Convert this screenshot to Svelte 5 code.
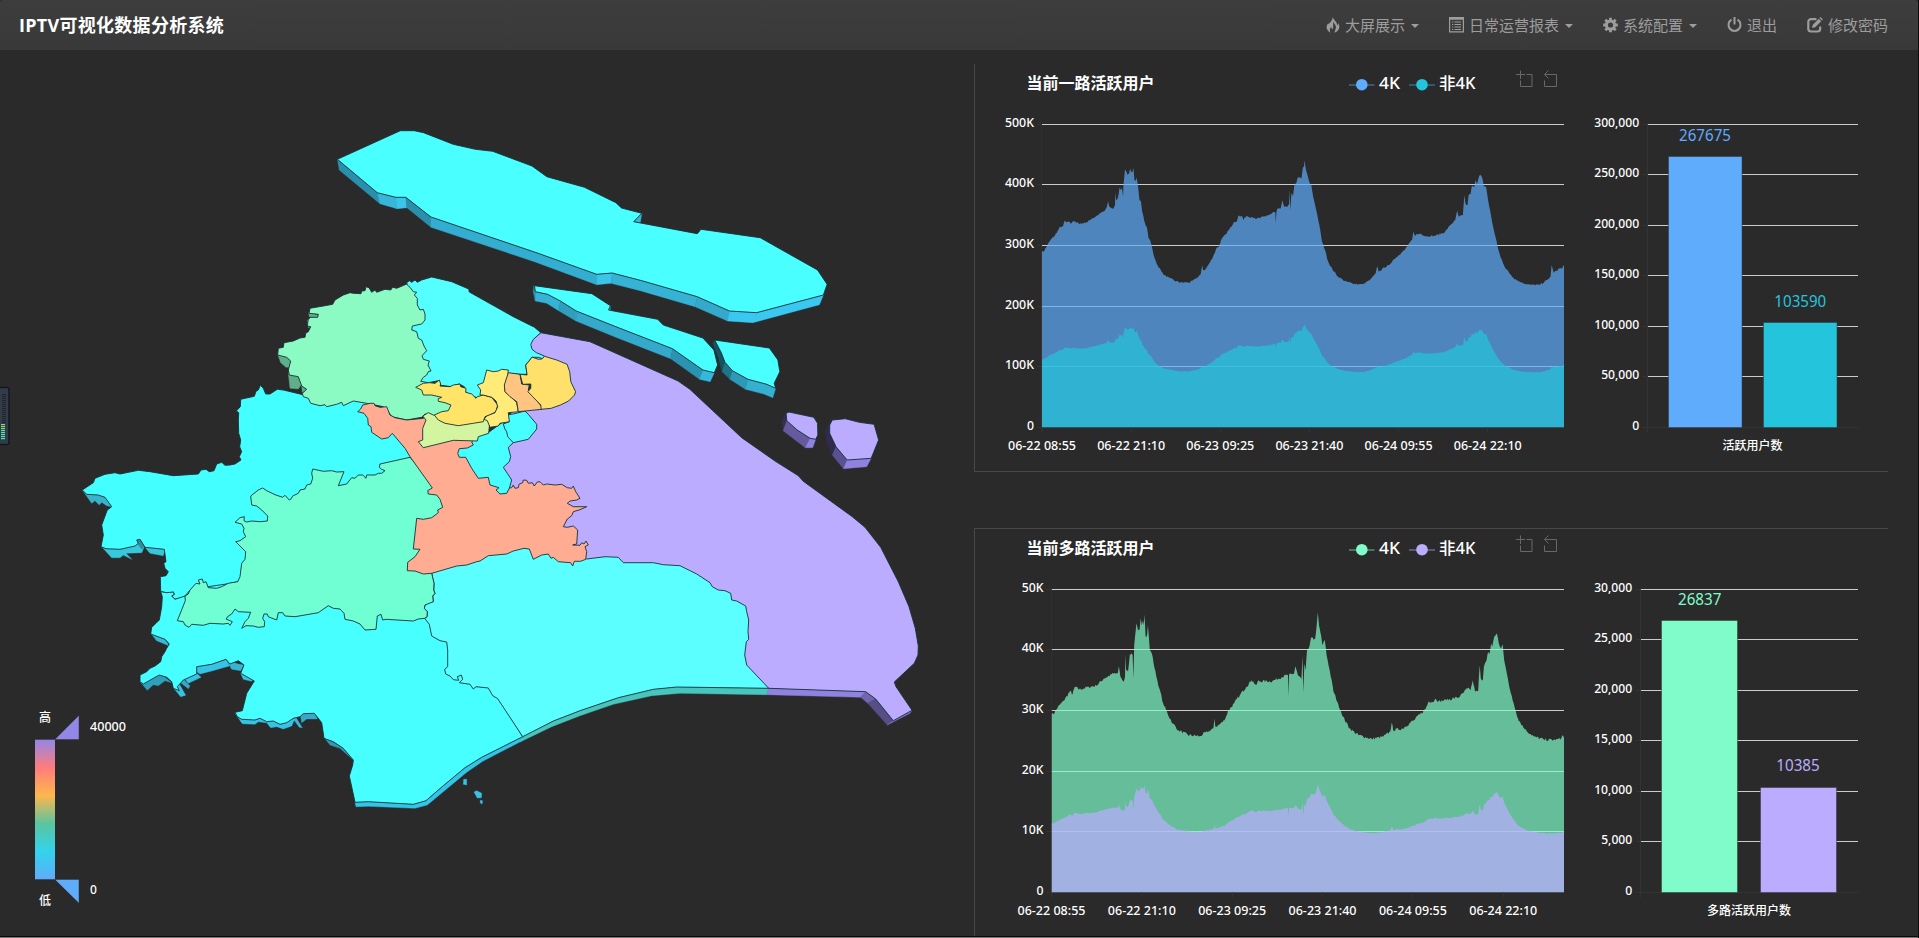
<script>
  const tiles = {
    N: [320, 110, 2.7034, 3],
    W: [70, 260, 3, 3],
    S: [120, 540, 3, 3],
    E: [480, 420, 3, 3]
  };
  function outline(src) {
    let t = tiles.N;
    const out = [];
    for (const tok of src.trim().split(/\s+/)) {
      if (tiles[tok]) { t = tiles[tok]; continue; }
      const [x, y] = tok.split(',').map(Number);
      out.push((t[0] + x / t[2]).toFixed(1) + ',' + (t[1] + y / t[3]).toFixed(1));
    }
    return out.join(' ');
  }

  const walls = [
    ['#2a8fac', 'N 47,148 155,248 162,281 52,180'],
    ['#38b6d8', 'N 155,248 205,262 208,296 162,281'],
    ['#3bc5e8', 'N 205,262 232,262 235,293 208,296'],
    ['#2a8fac', 'N 232,262 300,321 300,352 235,293'],
    ['#34aed0', 'N 300,321 590,430 748,493 748,524 580,455 300,352'],
    ['#3bc5e8', 'N 748,493 790,489 787,520 748,524'],
    ['#35b2d4', 'N 790,489 870,512 1020,560 1014,590 866,542 787,520'],
    ['#34a9cb', 'N 1020,560 1107,603 1102,633 1014,590'],
    ['#3bc8f0', 'N 1107,603 1180,608 1361,555 1350,584 1170,638 1102,633'],
    ['#38b6d8', 'N 848,335 870,310 866,338'],
    ['#2a8fac', 'N 578,527 582,545 582,573 576,545'],
    ['#36b2d4', 'N 582,545 615,553 650,573 645,602 613,580 582,573'],
    ['#2f9fbe', 'N 650,573 693,603 692,633 645,602'],
    ['#34a9cb', 'N 693,603 800,650 953,716 948,746 800,682 692,633'],
    ['#2a93b2', 'N 953,716 1035,780 1026,808 948,746'],
    ['#36b8dc', 'N 1035,780 1066,788 1055,815 1026,808'],
    ['#38b6d8', 'N 780,600 785,587 784,604'],
    ['#14525f', 'N 1067,690 1085,728 1095,757 1087,785 1076,740 1062,700'],
    ['#1f7488', 'N 1095,757 1115,782 1108,808 1087,785'],
    ['#2d99b6', 'N 1115,782 1157,808 1150,838 1108,808'],
    ['#35b0d0', 'N 1157,808 1208,823 1232,835 1224,863 1200,852 1150,838'],
    ['#332e52', 'N 1260,910 1262,932 1252,960 1248,935'],
    ['#655a9e', 'N 1262,932 1290,960 1325,985 1312,1013 1252,962'],
    ['#9082e0', 'N 1325,985 1340,988 1332,1013 1312,1013'],
    ['#302b4e', 'N 1380,932 1378,970 1395,1010 1385,1035 1370,1000 1366,965'],
    ['#5a5190', 'N 1395,1010 1425,1050 1415,1076 1385,1035'],
    ['#9082e0', 'N 1425,1050 1490,1045 1478,1070 1415,1076'],
    ['#9082e0', 'E 866,805 1157,815 1142,832 858,824'],
    ['#7066ae', 'E 1157,815 1187,837 1163,850 1142,832'],
    ['#574e87', 'E 1187,837 1240,902 1222,915 1163,850'],
    ['#8277cc', 'E 1240,902 1296,871 1290,880 1222,915'],
    ['#48c5bd', 'E 129,948 220,903 300,872 415,833 520,808 590,801 866,805 858,824 600,820 515,827 400,853 300,887 215,920 120,966'],
    ['#36c4e6', 'S 1208,590 1085,652 1035,683 970,737 918,782 880,793 745,785 705,787 708,800 745,799 885,805 922,795 1040,697 1088,664 1205,603'],
    ['#38b9da', 'S 94,282 135,298 148,318 110,302'],
    ['#319fbb', 'S 60,425 82,451 100,434 115,437 135,422 155,428 120,400'],
    ['#38c2e4', 'S 160,443 182,470 197,466 178,432'],
    ['#38a8c6', 'S 178,425 205,446 210,438 190,418'],
    ['#38c2e4', 'S 190,412 230,400 243,412 205,430'],
    ['#38c2e4', 'S 230,380 275,373 318,358 328,378 275,393 240,402 228,394'],
    ['#36b4d4', 'S 320,362 355,372 372,375 362,392 335,388'],
    ['#38c2e4', 'S 362,400 403,412 395,424 370,418'],
    ['#38c2e4', 'S 345,520 367,551 405,553 415,545 440,548 452,563 470,560 490,567 515,558 525,535 480,545 440,540 405,530'],
    ['#38b9da', 'S 525,528 547,563 538,562 522,540'],
    ['#38a8c6', 'S 540,520 583,515 592,537 560,537 545,548'],
    ['#3697b3', 'S 612,592 630,615 660,625 700,660 698,640'],
    ['#38c2e4', 'S 1031,718 1040,718 1040,735 1030,733'],
    ['#38c2e4', 'S 1062,756 1070,752 1085,760 1084,773 1072,774'],
    ['#38c2e4', 'S 1081,780 1088,783 1086,792 1081,789'],
    ['#37b3cc', 'W 37,690 65,730 75,722 88,735 95,727 110,737 125,740 105,708'],
    ['#38c8dc', 'W 93,858 125,893 150,893 160,885 185,898 168,880 215,878 222,862 200,840'],
    ['#2f8d9c', 'W 205,835 225,858 215,868 198,845'],
    ['#37c6dc', 'W 222,858 240,880 280,887 285,865'],
    ['#5faf8a', 'W 716,158 745,165 742,172 718,170'],
    ['#5faf8a', 'W 712,180 732,195 715,203'],
    ['#5faf8a', 'W 623,283 632,308 648,322 662,322 662,303 650,290'],
    ['#5faf8a', 'W 655,340 660,385 685,387 695,372 688,348'],
    ['#5faf8a', 'W 695,378 713,390 697,397']
  ];

  const fengxianWest = 'S 935,100 938,115 942,130 941,150 945,160 938,168 940,185 927,187 915,195 913,205 922,215 921,230 914,235';

  const regions = [
    ['#4affff', 'N 47,148 217,62 255,62 280,68 360,103 420,118 467,124 573,168 613,200 715,232 800,278 815,294 870,310 848,335 1020,371 1030,358 1190,383 1345,480 1371,523 1361,555 1180,608 1107,603 1020,560 870,512 790,489 748,493 590,430 300,321 232,262 205,262 155,248'],
    ['#4affff', 'N 580,527 735,551 785,587 780,600 913,628 928,645 1035,684 1065,720 1075,765 1066,788 1035,780 953,716 800,650 693,603 650,573 615,553 582,545'],
    ['#4affff', 'N 1067,690 1215,714 1238,750 1243,785 1228,820 1232,835 1208,823 1157,808 1115,782 1095,757 1085,728'],
    ['#bbacff', 'N 1268,906 1335,922 1345,940 1346,975 1340,988 1325,985 1290,960 1262,932 1260,910'],
    ['#bbacff', 'N 1385,930 1420,926 1458,937 1498,943 1510,990 1490,1045 1425,1050 1395,1010 1378,970 1378,945'],
    ['#bbacff', 'N 597,668 650,679 730,695 968,813 1000,838 1140,983 E 885,123 955,167 970,184 1117,290 1155,322 1202,382 1255,485 1287,560 1306,625 1315,678 1314,705 1303,730 1243,786 1248,800 1296,871 1240,902 1187,837 1157,815 866,805 700,700 300,450 200,300 90,260 40,190 40,40 N 540,880 590,800 540,750 560,702'],
    ['#44ffff', 'W 37,690 70,668 75,655 105,643 135,638 150,642 205,631 240,635 310,647 385,642 393,630 408,628 418,635 432,632 440,612 455,607 465,616 480,615 495,612 513,600 508,590 515,575 509,560 512,540 506,520 505,480 506,458 499,453 511,440 512,418 553,409 558,394 565,390 571,376 580,385 587,402 600,402 622,388 640,390 690,402 720,410 880,420 960,480 1040,600 900,700 700,760 560,800 560,900 503,965 440,985 S 212,148 205,170 195,168 190,172 165,178 155,168 163,163 160,156 150,160 140,158 122,155 121,110 138,107 145,95 135,85 131,70 138,65 133,28 W 283,868 225,862 210,838 200,840 205,850 195,858 150,868 108,866 93,860 100,825 95,795 112,750 125,740 105,712 85,705 50,703'],
    ['#48ffff', 'S 122,155 127,170 125,200 118,240 108,250 95,262 92,282 135,298 148,312 140,325 135,335 125,350 122,365 105,378 90,385 80,395 60,405 60,425 70,432 100,415 118,405 140,412 155,425 160,445 178,452 172,440 190,420 230,402 230,380 275,373 318,358 330,372 355,362 372,375 362,400 403,423 380,460 367,512 345,517 352,530 365,538 405,540 420,535 440,545 460,543 480,553 500,548 520,535 540,530 550,521 583,520 605,548 612,595 640,605 670,625 700,660 698,675 688,708 694,735 705,787 745,785 880,793 918,782 970,737 1035,683 1085,652 1208,590 1060,350 960,180 400,120 212,148 195,168 165,178 155,168 163,163 160,156 140,158'],
    ['#5cffff', fengxianWest + ' 928,253 935,288 960,302 980,306 983,330 983,380 974,388 977,402 990,408 1000,419 1016,421 1012,410 1024,405 1028,418 1018,428 1050,433 1060,447 1068,440 1105,444 1118,467 1133,476 1208,590 E 220,903 300,872 415,833 520,808 590,801 866,805 800,735 794,705 799,665 806,658 804,635 806,600 800,575 797,558 770,543 755,540 752,520 735,512 715,510 697,500 690,488 650,462 600,437 550,434 520,428 430,428 415,412 375,410 320,417 150,300 0,300'],
    ['#70fed3', 'W 1020,592 930,612 928,622 935,628 945,632 935,640 925,640 915,645 890,645 888,655 878,645 865,645 855,655 845,653 830,672 805,677 822,635 800,636 785,632 760,634 728,627 725,640 728,655 722,672 710,675 705,687 690,690 685,700 668,708 662,718 658,720 645,706 638,712 615,704 590,692 578,684 565,690 542,708 545,735 560,738 575,750 593,768 592,783 570,785 545,783 530,786 522,782 523,770 510,773 495,787 515,792 522,805 520,815 527,830 510,842 497,845 527,875 525,898 515,910 510,950 503,965 475,970 455,980 440,985 415,983 408,965 400,968 397,957 385,960 390,972 378,970 362,988 S 210,150 205,162 195,168 196,182 187,205 172,242 190,245 195,255 207,262 215,253 250,256 270,250 310,252 325,250 330,256 337,245 318,237 325,228 335,222 345,207 355,215 392,217 385,235 375,245 365,265 378,257 400,258 415,262 433,260 434,245 428,235 432,222 442,222 445,230 470,240 475,218 488,218 495,228 525,230 595,218 625,197 640,205 660,207 672,220 675,238 700,243 720,252 735,270 768,268 772,228 783,223 788,240 798,238 880,243 895,237 914,235 921,230 922,215 913,205 915,195 940,185 938,168 945,160 941,150 942,130 935,100 W 1200,850 1110,690'],
    ['#8bfbc3', 'W 1010,72 980,85 968,82 962,90 945,88 920,97 915,90 905,97 897,83 888,80 885,92 875,93 873,101 850,100 840,98 820,105 795,120 788,133 760,138 720,145 717,160 745,163 743,172 722,172 715,178 712,198 722,200 715,215 707,220 705,232 690,234 670,243 642,248 640,262 625,265 623,285 650,292 662,303 655,330 658,345 685,350 695,378 710,388 697,400 700,410 715,415 722,430 750,437 765,434 770,440 800,433 815,427 820,437 850,423 890,430 940,440 955,455 965,470 1010,480 1055,472 1065,462 1100,470 1170,440 1120,390 1075,360 1095,330 1075,205 1085,150 1065,95 1035,78'],
    ['#55ffff', 'W 1020,82 1012,75 1010,68 1018,62 1025,67 1035,60 1042,67 1055,60 1085,51 1145,65 1196,87 1198,96 1330,170 1390,200 N 578,650 597,668 577,688 570,703 573,718 585,728 607,738 602,746 590,742 573,742 556,765 560,793 541,793 510,790 490,835 440,870 428,865 412,858 W 1200,402 1188,398 1183,380 1168,372 1145,380 1112,376 1105,362 1075,368 1052,364 1060,352 1070,345 1075,335 1083,333 1074,315 1078,303 1060,298 1056,287 1070,272 1062,258 1055,240 1045,235 1040,215 1025,210 1027,198 1055,192 1065,180 1065,162 1060,148 1050,150 1042,135 1042,115 1033,105 1040,97 1030,95'],
    ['#ffac92', 'W 863,455 872,447 878,435 900,430 912,430 915,437 930,442 950,440 960,465 975,473 1010,480 1060,475 1070,465 1120,480 1212,530 1240,560 1215,575 1205,590 1220,630 1250,640 1275,660 1300,680 1310,698 E 82,205 95,203 100,195 105,205 115,203 117,193 128,188 130,180 140,181 145,190 157,188 163,198 172,186 180,185 190,195 200,192 225,195 245,193 262,203 275,205 280,198 287,215 300,235 290,240 270,243 262,250 280,260 320,260 300,269 280,275 275,287 262,297 250,320 262,322 280,318 293,330 290,372 278,375 300,376 305,368 312,372 318,363 325,375 315,380 320,395 317,418 302,424 283,424 278,438 272,428 235,425 220,412 213,415 205,402 185,405 160,418 148,387 132,385 100,393 80,402 25,407 0,423 W 1220,905 1190,915 1160,918 1085,940 1060,942 1035,933 1012,932 1013,907 1035,890 1050,868 1030,867 1040,775 1060,778 1085,773 1105,758 1103,750 1118,742 1110,718 1100,705 1075,702 1073,692 1087,684 1070,660 1020,590 1005,565 967,520 955,533 935,537 905,517 903,500 895,495 893,475 882,460'],
    ['#48ffff', 'W 1252,520 1300,485 1310,515 1325,530 1330,548 1315,562 1322,590 1318,605 1300,622 1312,640 1325,660 1318,685 1310,700 1290,702 1278,690 1287,683 1260,675 1255,652 1225,655 1205,625 1187,592 1168,592 1163,580 1168,566 1192,564 1210,555 1205,546 1225,525'],
    ['#48ffff', 'W 1310,465 1330,462 1365,453 1375,463 1400,493 1400,507 1375,538 1330,548 1313,530 1310,515 1305,508 1300,492 1318,485'],
    ['#d3f59f', 'W 1058,468 1075,458 1090,465 1120,475 1165,480 1235,465 1262,470 1258,500 1256,520 1225,530 1222,543 1150,541 1060,563 1045,545 1058,540 1058,505 1068,480'],
    ['#ffe468', 'W 1037,382 1060,370 1078,368 1095,370 1108,360 1112,372 1110,378 1140,380 1150,375 1170,372 1172,380 1188,385 1187,397 1205,402 1218,415 1222,410 1240,405 1265,412 1283,435 1278,455 1260,465 1245,470 1240,485 1210,490 1165,497 1125,490 1105,480 1093,465 1115,455 1135,452 1143,435 1125,428 1105,424 1105,416 1115,412 1085,405 1060,405 1055,390'],
    ['#ffeb77', 'W 1250,330 1270,335 1285,333 1295,328 1315,330 1313,350 1305,375 1305,395 1328,415 1340,428 1345,455 1315,458 1318,485 1290,490 1285,498 1260,502 1252,482 1242,478 1250,468 1275,458 1283,440 1278,423 1265,412 1240,405 1230,405 1232,390 1222,375 1240,368'],
    ['#ffc47f', 'W 1315,338 1350,343 1355,372 1378,375 1375,390 1395,415 1415,440 1415,448 1345,455 1340,425 1320,410 1305,395 1303,375'],
    ['#ffe06a', 'N 541,793 560,795 556,765 566,752 573,741 590,748 600,747 607,739 640,750 668,763 675,785 678,815 691,845 688,855 672,873 650,885 625,895 598,898 597,885 575,860 562,845 570,835 570,822 548,823']
  ];

  // Concurrent users through time: plot-space samples, x then height line.
  const seriesSingle = '188,605 192,605 210,570 222,555 236,530 243,528 247,512 252,517 258,514 263,520 270,512 278,518 292,520 308,515 318,505 328,500 340,490 352,482 357,472 361,453 364,470 375,476 379,465 380,428 382,450 386,445 391,412 395,420 397,412 400,440 401,405 405,358 412,375 416,370 418,355 424,368 427,353 430,390 433,392 435,382 438,400 443,450 447,455 450,485 458,522 462,530 466,560 472,575 480,615 490,645 500,663 508,675 520,683 533,691 550,697 575,697 590,686 603,672 607,645 609,660 615,658 625,640 635,620 645,592 650,590 656,570 668,552 678,537 690,515 698,512 702,495 712,500 714,510 722,498 745,505 770,498 790,488 798,487 799,520 801,483 805,475 812,475 816,450 821,470 830,470 834,462 835,418 837,480 840,430 844,438 848,402 853,398 856,382 866,385 870,352 873,348 874,330 878,360 883,380 888,400 892,405 897,440 905,480 913,525 920,575 928,600 936,635 948,660 963,680 980,693 1000,700 1025,703 1045,690 1060,670 1064,648 1068,665 1083,652 1095,645 1105,630 1120,615 1135,600 1155,570 1159,545 1162,555 1178,550 1190,558 1215,557 1240,547 1255,525 1268,510 1273,482 1277,500 1288,495 1292,435 1295,460 1300,465 1303,435 1308,432 1312,405 1318,410 1321,390 1325,402 1330,380 1334,374 1338,380 1343,408 1349,412 1354,450 1362,500 1370,545 1378,585 1386,620 1400,655 1420,683 1440,697 1465,704 1488,704 1508,690 1517,680 1520,645 1525,668 1540,655 1546,655 1552,645';
  const seriesMulti = '213,612 218,612 230,590 245,572 262,542 268,552 274,530 285,538 310,530 330,527 350,505 375,490 386,490 389,468 393,500 402,515 405,500 406,433 408,480 413,485 418,430 425,435 427,505 429,405 435,340 439,362 443,360 446,325 449,345 452,330 454,345 456,313 459,380 463,372 465,345 470,420 475,430 487,500 495,535 505,580 517,612 530,640 545,660 570,675 600,678 620,665 636,655 639,625 641,650 650,645 665,630 676,600 690,580 705,555 722,530 736,510 748,525 752,513 790,513 815,500 831,494 832,558 834,492 847,490 850,468 857,495 866,508 869,437 871,548 874,460 877,480 881,418 887,410 891,385 902,385 906,345 909,306 912,345 918,380 921,405 927,390 932,435 940,480 950,545 962,580 975,620 992,655 1015,675 1050,686 1080,680 1098,665 1102,638 1106,660 1130,655 1160,630 1190,597 1199,573 1212,575 1217,565 1225,573 1245,570 1280,560 1300,535 1308,540 1314,510 1320,545 1328,542 1332,465 1335,505 1340,510 1343,470 1350,450 1354,425 1358,430 1362,400 1365,410 1370,380 1377,370 1382,400 1388,415 1392,402 1396,450 1407,515 1418,570 1432,625 1450,658 1475,680 1500,688 1530,690 1545,685 1549,675 1552,682';

  // Turns samples into an area path; the secondary line keeps a fixed share of the total.
  function area(src, base, share, noise, top) {
    const pts = src.split(' ').map((p) => p.split(',').map(Number));
    const foot = top + 303;
    const out = [];
    let seed = 7;
    for (let i = 0; i < pts.length - 1; i++) {
      const [x1, y1] = pts[i], [x2, y2] = pts[i + 1];
      const n = Math.max(1, Math.round((x2 - x1) / 2.4));
      for (let k = 0; k < n; k++) {
        seed = (seed * 16807) % 2147483647;
        const j = k ? (seed / 2147483647 - 0.5) * noise : 0;
        const h = (base - (y1 + ((y2 - y1) * k) / n) + j) / 3;
        out.push((970 + (x1 + ((x2 - x1) * k) / n) / 2.6133).toFixed(1) + ',' + (foot - h * share).toFixed(1));
      }
    }
    const end = pts[pts.length - 1];
    out.push('1564,' + (foot - ((base - end[1]) / 3) * share).toFixed(1));
    const x0 = (970 + pts[0][0] / 2.6133).toFixed(1);
    return `M${x0},${foot}L${out.join('L')}L1564,${foot}Z`;
  }

  const panels = [
    {
      id: 'single', title: '当前一路活跃用户', y: 64, top: 124.5, left: 1042, step: 89.15, a: '#60acfc', b: '#24c4dc',
      data: seriesSingle, base: 1132, noise: 5,
      yl: ['500K', '400K', '300K', '200K', '100K', '0'],
      barLeft: 1647.5, bl: ['300,000', '250,000', '200,000', '150,000', '100,000', '50,000', '0'], cat: '活跃用户数',
      catW: 60, catX: 1752.5,
      bars: [[1668.5, 73.5, 156.5, '267675', 1705, 141, 52], [1763.5, 73.5, 322.5, '103590', 1800.3, 307, 52]]
    },
    {
      id: 'multi', title: '当前多路活跃用户', y: 528, top: 589.5, left: 1051.5, step: 90.35, a: '#80fcca', b: '#bbacff',
      data: seriesMulti, base: 1147, noise: 9,
      yl: ['50K', '40K', '30K', '20K', '10K', '0'],
      barLeft: 1640.5, bl: ['30,000', '25,000', '20,000', '15,000', '10,000', '5,000', '0'], cat: '多路活跃用户数',
      catW: 84, catX: 1749,
      bars: [[1661.5, 76, 620.5, '26837', 1699.7, 605, 43.5], [1760.5, 76, 787.5, '10385', 1798, 771, 43.5]]
    }
  ];
  const times = ['06-22 08:55', '06-22 21:10', '06-23 09:25', '06-23 21:40', '06-24 09:55', '06-24 22:10'];
  const snap = (v) => Math.floor(v) + 0.5;
  const grid = (top, i, step) => top + Math.max(0, Math.round(i * step - 0.2));
</script>

<div class="page">
  <header>
    <h1>IPTV可视化数据分析系统</h1>
    <nav>
      <a><svg width="14" height="18" viewBox="0 0 14 18"><path d="M6.300.5C7.500 4 4 6 2.500 8.200L2.300 7C.2 9.500-.8 14 4.500 16.700 3 14.500 4.200 12.500 5.200 10.800c.3 1.400.5 2 1.300 2.600C7.800 11 6.800 8.500 7.300 5.500 8 8 10.500 9 9.800 12c-.4 1.800-.8 3-1.600 4.700 5.300-1.500 6.300-6 4-9.700-.1 1.200-.4 2-1 2.500C11.300 5.500 7.800 4.500 6.300.5z" /></svg><span>大屏展示</span><i></i></a>
      <a><svg width="15" height="18" viewBox="0 0 15 18"><path fill-rule="evenodd" d="M0 1h15v15.500H0zM1.200 3.800v11.500h12.600V3.800z" /><path d="M3 5.500h1.300v1H3zm2.500 0H12v1H5.500zM3 8h1.300v1H3zm2.500 0H12v1H5.500zM3 10.500h1.300v1H3zm2.500 0H12v1H5.500zM3 13h1.300v1H3zm2.500 0H12v1H5.500z" /></svg><span>日常运营报表</span><i></i></a>
      <a><svg width="15" height="18" viewBox="-7.500 -9 15 18"><circle r="4.100" fill="none" stroke="currentColor" stroke-width="3" /><g stroke="currentColor" stroke-width="2.800"><path d="M0-7.300V-4.500M0 7.300V4.500M-7.300 0H-4.500M7.300 0H4.500M-5.200-5.200l2 2M5.200 5.200l-2-2M-5.200 5.200l2-2M5.200-5.200l-2 2" /></g></svg><span>系统配置</span><i></i></a>
      <a><svg width="15" height="18" viewBox="0 0 15 18"><path d="M4.500 3.700a6 6 0 1 0 6 0M7.500 1v7.500" fill="none" stroke="currentColor" stroke-width="2" /></svg><span>退出</span></a>
      <a><svg width="16" height="18" viewBox="0 0 16 18"><path d="M9.500 3.200H4A2.700 2.700 0 0 0 1.300 6v7A2.700 2.700 0 0 0 4 15.500h6.500A2.700 2.700 0 0 0 13.200 13v-2.500" fill="none" stroke="currentColor" stroke-width="2.200" /><path d="M5 12l.8-3.200 6-6 2.400 2.400-6 6zM12.500 2l1-1 2.400 2.400-1 1z" /></svg><span>修改密码</span></a>
    </nav>
  </header>

  <main>
    <svg class="map" width="974" height="886" viewBox="0 50 974 886">
      <defs>
        <linearGradient id="ramp" x1="0" y1="0" x2="0" y2="1">
          <stop offset="0" stop-color="#9287e7" /><stop offset=".2" stop-color="#ff7c7c" /><stop offset=".4" stop-color="#feb64d" />
          <stop offset=".6" stop-color="#5bc49f" /><stop offset=".8" stop-color="#32d3eb" /><stop offset="1" stop-color="#60acfc" />
        </linearGradient>
      </defs>
      {#each walls as [fill, pts]}<polygon points={outline(pts)} {fill} stroke={fill} stroke-width=".4" />{/each}
      {#each regions as [fill, pts]}<polygon class="region" points={outline(pts)} {fill} />{/each}

      <rect x="35" y="739.500" width="20" height="140" fill="url(#ramp)" />
      <path d="M55 739.500L79 715.500V739.500Z" fill="#9287e7" />
      <path d="M55 879.500H79V903Z" fill="#60acfc" />
      <path d="M35 739.500H79V716M35 879.500H79V902" fill="none" stroke="#333" stroke-opacity=".5" />
      <g class="label">
        <text x="45" y="721.500" text-anchor="middle">高</text>
        <text x="45" y="904.500" text-anchor="middle">低</text>
        <text x="90" y="731" textLength="36" lengthAdjust="spacingAndGlyphs">40000</text>
        <text x="90" y="894">0</text>
      </g>
      <rect x="-4" y="387.500" width="13" height="57" rx="2" fill="#333a48" stroke="#141824" stroke-width="1.500" />
      {#each Array(15) as _, i}<rect x="2" y={394 + i * 2} width="4" height="1" fill="#20222c" />{/each}
      {#each Array(8) as _, i}<rect x="1" y={424 + i * 2} width="4" height="1.200" fill={i < 3 ? '#7fe36c' : '#4fe3b4'} />{/each}
    </svg>

    <div class="column">
      {#each panels as p}
        <section class={p.id}>
          <svg class="trend" width="600" height="407" viewBox="975 {p.y} 600 407">
            <text class="title" x="1026.500" y={p.top - 35.5} textLength="128" lengthAdjust="spacingAndGlyphs">{p.title}</text>
            <g class="legend">
              <path d="M1349 {p.top - 39.5}h25.500" stroke={p.a} stroke-opacity=".7" />
              <circle cx="1361.800" cy={p.top - 39.8} r="5.800" fill={p.a} />
              <text x="1379" y={p.top - 35.5} textLength="21" lengthAdjust="spacingAndGlyphs">4K</text>
              <path d="M1409 {p.top - 39.5}h26" stroke={p.b} stroke-opacity=".7" />
              <circle cx="1422" cy={p.top - 39.8} r="5.800" fill={p.b} />
              <text x="1439" y={p.top - 35.5} textLength="36.500" lengthAdjust="spacingAndGlyphs">非4K</text>
            </g>
            <g transform="translate(0 {p.top})" fill="none" stroke="#686868">
              <path d="M1516-50h9M1520.500-54v8.500M1526.500-50h5.500v12h-11.500v-6" />
              <path d="M1548.500-54l-4 4 4 4M1545-50h11.500v12h-12v-6" />
            </g>
            {#each p.yl as label, i}
              {#if i < 5}<path d="M{p.left} {grid(p.top, i, 60.6)}H1564" stroke="#ccc" />{/if}
              <path d="M{p.left - 5} {grid(p.top, i, 60.6)}h5" stroke="#333" />
              <text class="label" x={p.left - 8} y={p.top + 2.3 + i * 60.6} text-anchor="end" textLength={label === '0' ? 7 : label.length * 7.25} lengthAdjust="spacingAndGlyphs">{label}</text>
            {/each}
            <path d={area(p.data, p.base, 1, p.noise, p.top)} fill={p.a} fill-opacity=".7" />
            <path d={area(p.data, p.base, 0.387, p.noise, p.top)} fill={p.b} fill-opacity=".7" />
            <path d="M{snap(p.left - 0.5)} {p.top}v308M{p.left} {p.top + 303}H1564" fill="none" stroke="#333" stroke-opacity=".6" />
            {#each times as t, i}
              <path d="M{snap(p.left + i * p.step)} {p.top + 303}v5" stroke="#333" />
              <text class="label" x={p.left + i * p.step} y={p.top + 325} text-anchor="middle" textLength="68" lengthAdjust="spacingAndGlyphs">{t}</text>
            {/each}
          </svg>
          <svg class="totals" width="313" height="407" viewBox="1575 {p.y} 313 407">
            {#each p.bl as label, i}
              {#if i < 6}<path d="M{p.barLeft} {grid(p.top, i, 50.5)}H1858" stroke="#ccc" />{/if}
              <path d="M{p.barLeft - 5} {grid(p.top, i, 50.5)}h5" stroke="#333" />
              <text class="label" x={p.barLeft - 8.3} y={p.top + 2.3 + i * 50.5} text-anchor="end" textLength={label === '0' ? 7 : (label.length - 1) * 7 + 3} lengthAdjust="spacingAndGlyphs">{label}</text>
            {/each}
            <path d="M{p.barLeft} {p.top}v308M{p.barLeft} {p.top + 303}H1858" fill="none" stroke="#333" />
            {#each p.bars as [x, w, y, value, cx, ty, len], i}
              <rect {x} {y} width={w} height={p.top + 303 - y} fill={i ? p.b : p.a} stroke="#333" stroke-opacity=".5" />
              <text class="value" x={cx} y={ty} text-anchor="middle" textLength={len} lengthAdjust="spacingAndGlyphs" fill={i ? p.b : p.a}>{value}</text>
            {/each}
            <text class="label" x={p.catX} y={p.top + 325.5} text-anchor="middle" textLength={p.catW} lengthAdjust="spacingAndGlyphs">{p.cat}</text>
          </svg>
        </section>
      {/each}
    </div>
  </main>
  <footer></footer>
</div>

<style>
  :global(body) { background: #2a2a2a; overflow: hidden; }
  .page {
    box-sizing: border-box;
    width: 1919px;
    height: 938px;
    display: flex;
    flex-direction: column;
    border-right: 1px solid #0c0c0c;
    background: #2a2a2a;
    font-family: "Noto Sans", "Noto Sans CJK SC", sans-serif;
  }
  header {
    flex: 0 0 50px;
    box-sizing: border-box;
    display: flex;
    align-items: center;
    justify-content: space-between;
    padding: 0 30px 0 19px;
    background: linear-gradient(#3d3d3d, #393939);
    border-radius: 3px 3px 0 0;
  }
  h1 {
    margin: 0;
    color: #fff;
    font: bold 18px/50px "Open Sans", "Noto Sans CJK SC", sans-serif;
    letter-spacing: 0.28px;
    white-space: nowrap;
  }
  nav { display: flex; gap: 30.5px; color: #9d9d9d; }
  nav a { display: flex; align-items: center; font: 15px/50px "Noto Sans CJK SC", sans-serif; white-space: nowrap; }
  nav svg { margin-right: 4.500px; fill: currentColor; }
  nav i { margin: 2px 0 0 6px; border: 4px solid transparent; border-top-color: currentColor; border-bottom: 0; }
  main { flex: 1; display: flex; min-height: 0; }
  svg { display: block; flex: none; }
  .region { stroke: #143238; stroke-width: 0.9; stroke-linejoin: round; }
  .column { width: 914px; padding-top: 14px; display: flex; flex-direction: column; gap: 56px; }
  section { box-sizing: border-box; height: 408px; flex: none; display: flex; border-left: 1px solid #484848; }
  .single { border-bottom: 1px solid #484848; }
  .multi { border-top: 1px solid #484848; }
  .multi svg { margin-top: -1px; }
  .label { fill: #fff; font-size: 12px; font-weight: 500; }
  .title { fill: #fff; font-size: 16px; font-weight: bold; }
  .legend text { fill: #fff; font-size: 16px; font-weight: 500; }
  .value { font-size: 16px; }
  footer { flex: 0 0 2px; box-sizing: border-box; border-top: 1px solid #0a0a0a; background: #777; }
</style>
